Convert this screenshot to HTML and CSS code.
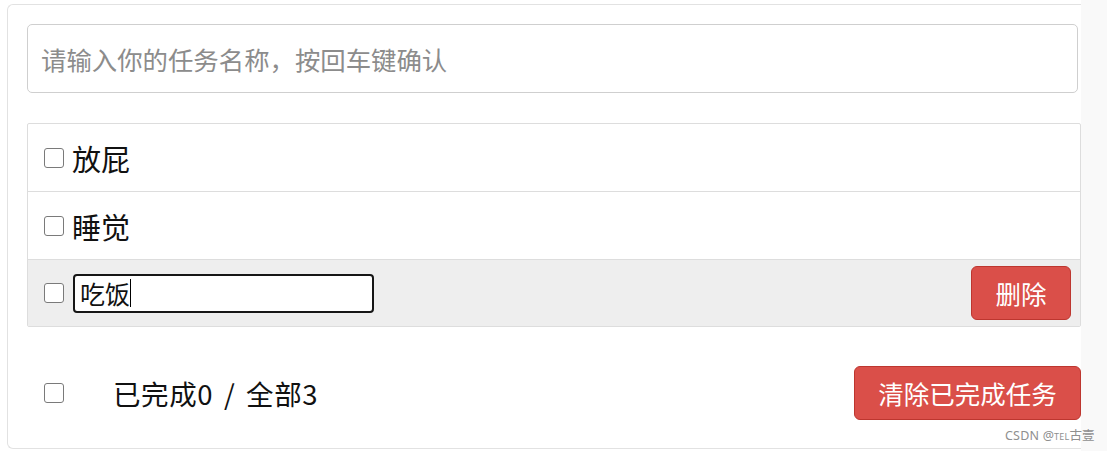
FILE: index.html
```html
<!DOCTYPE html>
<html lang="zh">
<head>
<meta charset="utf-8">
<title>Todo</title>
<link rel="stylesheet" href="styles.css">
</head>
<body>
<div class="page">
  <div class="todo-wrap">
    <div class="todo-header">
      <input class="todo-input" type="text" placeholder="请输入你的任务名称，按回车键确认">
    </div>
    <ul class="todo-list">
      <li class="todo-item">
        <span class="check"></span>
        <span class="title">放屁</span>
      </li>
      <li class="todo-item">
        <span class="check"></span>
        <span class="title">睡觉</span>
      </li>
      <li class="todo-item hover">
        <span class="check"></span>
        <div class="edit">吃饭<span class="caret"></span></div>
        <button class="btn btn-danger btn-del">删除</button>
      </li>
    </ul>
    <div class="todo-footer">
      <div class="footer-left">
        <span class="check"></span>
        <span class="count">已完成0 / 全部3</span>
      </div>
      <button class="btn btn-danger btn-clear">清除已完成任务</button>
    </div>
  </div>
  <div class="watermark">CSDN @<span class="small">TEL</span>古壹</div>
</div>
<div class="scroll-strip"></div>
</body>
</html>
```

FILE: styles.css
```css
html, body {
  margin: 0;
  padding: 0;
  background: #ffffff;
}

body {
  display: flex;
  width: 1107px;
  height: 451px;
  overflow: hidden;
  font-family: "Noto Sans CJK SC", "Noto Sans", sans-serif;
  color: #111;
}

.page {
  position: relative;
  width: 1081px;
  height: 451px;
  padding: 4px 0 0 7px;
  box-sizing: border-box;
}

.scroll-strip {
  flex: 1;
  background: #f9f9f9;
}

.todo-wrap {
  width: 1074px;
  height: 445px;
  box-sizing: border-box;
  border: 1px solid #e2e2e2;
  border-right: none;
  border-radius: 6px 0 0 6px;
  padding: 19px 0 0 19px;
}

.todo-input {
  display: block;
  width: 1051px;
  height: 69px;
  box-sizing: border-box;
  border: 1px solid #cfcfcf;
  border-radius: 5px;
  padding: 0 13px;
  margin: 0;
  font-family: "Noto Sans CJK SC", "Noto Sans", sans-serif;
  font-size: 25.4px;
  color: #333;
  outline: none;
  background: #fff;
}

.todo-input::placeholder {
  color: #8c8c8c;
}

.todo-list {
  list-style: none;
  margin: 30px 0 0 0;
  padding: 0;
  width: 1054px;
  box-sizing: border-box;
  border: 1px solid #dddddd;
  border-radius: 2px;
}

.todo-item {
  display: flex;
  align-items: center;
  height: 67px;
  box-sizing: content-box;
  padding: 0 9px 0 16px;
  border-bottom: 1px solid #dddddd;
}

.todo-item:last-child {
  border-bottom: none;
  height: 66px;
}

.todo-item.hover {
  background: #eeeeee;
}

.check {
  display: inline-block;
  width: 18px;
  height: 18px;
  border: 1.5px solid #7a7a7a;
  border-radius: 3px;
  background: #fff;
  flex-shrink: 0;
}

.title {
  margin-left: 8px;
  font-size: 29px;
  line-height: 34px;
  color: #111;
}

.edit {
  display: flex;
  align-items: center;
  margin-left: 9px;
  width: 301px;
  height: 39px;
  box-sizing: border-box;
  border: 2px solid #161616;
  border-radius: 4px;
  background: #fff;
  padding-left: 5px;
  font-size: 25px;
  line-height: 30px;
  color: #111;
}

.caret {
  display: inline-block;
  width: 1px;
  height: 28px;
  background: #000;
}

.btn {
  font-family: "Noto Sans CJK SC", "Noto Sans", sans-serif;
  color: #ffffff;
  border-radius: 6px;
  padding: 0;
  cursor: pointer;
  line-height: 1;
}

.btn-danger {
  background: #da4f49;
  border: 1px solid #bd362f;
}

.btn-del {
  margin-left: auto;
  width: 100px;
  height: 54px;
  font-size: 25.5px;
}

.todo-footer {
  display: flex;
  align-items: center;
  justify-content: space-between;
  width: 1054px;
  height: 54px;
  margin-top: 39px;
  padding-left: 17px;
  box-sizing: border-box;
}

.footer-left {
  display: flex;
  align-items: center;
}

.count {
  margin-left: 49px;
  font-size: 27.5px;
  line-height: 32px;
  word-spacing: 4px;
  letter-spacing: 0.6px;
  color: #111;
}

.btn-clear {
  width: 227px;
  height: 54px;
  font-size: 25.5px;
}

.watermark {
  position: absolute;
  left: 1005px;
  top: 425px;
  font-family: "Noto Sans", "Noto Sans CJK SC", sans-serif;
  font-size: 12.5px;
  color: #8f8f8f;
  white-space: nowrap;
  letter-spacing: 0.2px;
}

.watermark .small {
  font-size: 9px;
}
```
